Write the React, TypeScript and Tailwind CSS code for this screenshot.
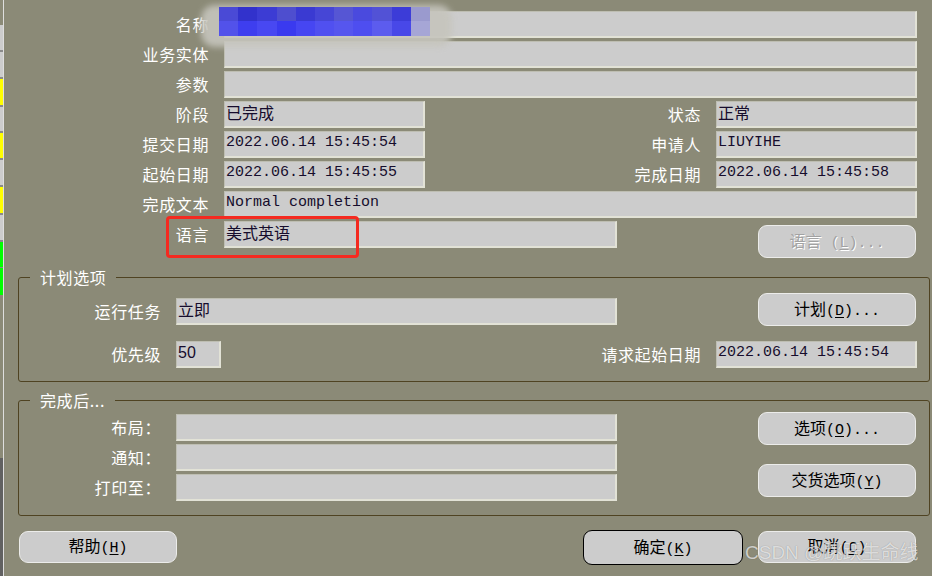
import React from "react";

const cjk = "font-['Noto_Sans_CJK_SC',sans-serif]";
const mono = "font-['Liberation_Mono','Noto_Sans_CJK_SC',monospace]";

type FIELD_PROPS = {
  w: string;
  children?: React.ReactNode;
  font?: string;
  className?: string;
};

function Field(props: FIELD_PROPS) {
  const { w, children, font, className } = props;
  return (
    <div
      className={`${w} ${className ?? ""} h-[27px] shrink-0 overflow-hidden whitespace-pre bg-[#cccccc] border-t border-l border-t-[#bebeb2] border-l-[#bebeb2] border-r-2 border-b-2 border-r-[#e2e2d6] border-b-[#e2e2d6] pl-px leading-[21px] text-[#160c2c] ${
        font ?? cjk
      }`}
    >
      {children}
    </div>
  );
}

function Label({ w, text, className }: { w: string; text: string; className?: string }) {
  return (
    <div
      className={`${w} ${className ?? ""} shrink-0 text-right text-[16px] leading-[27px] tracking-[0.6px] text-white ${cjk}`}
    >
      {text}
    </div>
  );
}

type BTN_PROPS = {
  zh: string;
  hot: string;
  dots?: boolean;
  disabled?: boolean;
  className?: string;
};

function Btn(props: BTN_PROPS) {
  const { zh, hot, dots, disabled, className } = props;
  return (
    <button
      className={`${
        className ?? "h-[33px] w-[158px] border-[#ececea]"
      } flex shrink-0 items-center justify-center rounded-[9px] border bg-[#cccccc] text-[16px] ${
        disabled
          ? "text-[#a2a2a2] [text-shadow:1px_1px_0_#ffffff]"
          : "text-black"
      }`}
    >
      <span className="whitespace-pre leading-[20px]">
        <span className={cjk}>{zh}</span>
        <span className={`${mono} text-[15px]`}>
          {disabled ? " (" : "("}
          <span className="underline underline-offset-2">{hot}</span>)
          {dots ? "..." : ""}
        </span>
      </span>
    </button>
  );
}

const stripe = [
  { h: "h-[25px]", c: "bg-[#8b8a77]" },
  { h: "h-[25px]", c: "bg-[#cccccc]" },
  { h: "h-[2px]", c: "bg-[#8a8a8a]" },
  { h: "h-[25px]", c: "bg-[#cccccc]" },
  { h: "h-[2px]", c: "bg-[#8a8a8a]" },
  { h: "h-[26px]", c: "bg-[#ffff00]" },
  { h: "h-[2px]", c: "bg-[#8a8a8a]" },
  { h: "h-[24px]", c: "bg-[#cccccc]" },
  { h: "h-[2px]", c: "bg-[#8a8a8a]" },
  { h: "h-[25px]", c: "bg-[#ffff00]" },
  { h: "h-[2px]", c: "bg-[#8a8a8a]" },
  { h: "h-[25px]", c: "bg-[#cccccc]" },
  { h: "h-[2px]", c: "bg-[#8a8a8a]" },
  { h: "h-[26px]", c: "bg-[#ffff00]" },
  { h: "h-[2px]", c: "bg-[#8a8a8a]" },
  { h: "h-[25px]", c: "bg-[#cccccc]" },
  { h: "h-[2px]", c: "bg-[#8a8a8a]" },
  { h: "h-[25px]", c: "bg-[#00ff00]" },
  { h: "h-[1px]", c: "bg-[#8a8a8a]" },
  { h: "h-[27px]", c: "bg-[#00ff00]" },
  { h: "h-[163px]", c: "bg-[#8b8a77]" },
  { h: "flex-1", c: "bg-[#616161]" },
];

const blurTop = ["#4a4ad6", "#3232cc", "#3c3cd4", "#4e4ecf", "#3a3ad2", "#4646d6", "#5656d4", "#4a4ade", "#5252d6", "#3c3cd8", "#9a9ace"];
const blurBottom = ["#5252ea", "#3e3eef", "#4848f2", "#3a3aef", "#4646f2", "#5050f0", "#5656ee", "#4e4ef0", "#5c5cee", "#4848e8", "#a6a6d6"];

export default function App() {
  return (
    <div className="relative flex h-[576px] w-[932px] overflow-hidden bg-[#8b8a77]">
      <div className="flex w-[3px] shrink-0 flex-col">
        {stripe.map((s, i) => (
          <div key={i} className={`${s.h} ${s.c} shrink-0`} />
        ))}
      </div>
      <div className="w-px shrink-0 bg-[#dedede]" />

      <div className="flex flex-1 flex-col">
        {/* top fields */}
        <div className="flex flex-col gap-[3px] pt-[11px]">
          <div className="flex items-start">
            <Label w="w-[205px]" text="名称" />
            <Field w="w-[693px]" className="ml-[15px]" />
          </div>
          <div className="flex items-start">
            <Label w="w-[205px]" text="业务实体" />
            <Field w="w-[693px]" className="ml-[15px]" />
          </div>
          <div className="flex items-start">
            <Label w="w-[205px]" text="参数" />
            <Field w="w-[693px]" className="ml-[15px]" />
          </div>
          <div className="flex items-start">
            <Label w="w-[205px]" text="阶段" />
            <Field w="w-[201px]" className="ml-[15px]">
              已完成
            </Field>
            <Label w="w-[276px]" text="状态" />
            <Field w="w-[201px]" className="ml-[15px]">
              正常
            </Field>
          </div>
          <div className="flex items-start">
            <Label w="w-[205px]" text="提交日期" />
            <Field w="w-[201px]" className="ml-[15px]" font={mono}>
              <span className="text-[15px]">2022.06.14 15:45:54</span>
            </Field>
            <Label w="w-[276px]" text="申请人" />
            <Field w="w-[201px]" className="ml-[15px]" font={mono}>
              <span className="text-[15px]">LIUYIHE</span>
            </Field>
          </div>
          <div className="flex items-start">
            <Label w="w-[205px]" text="起始日期" />
            <Field w="w-[201px]" className="ml-[15px]" font={mono}>
              <span className="text-[15px]">2022.06.14 15:45:55</span>
            </Field>
            <Label w="w-[276px]" text="完成日期" />
            <Field w="w-[201px]" className="ml-[15px]" font={mono}>
              <span className="text-[15px]">2022.06.14 15:45:58</span>
            </Field>
          </div>
          <div className="flex items-start">
            <Label w="w-[205px]" text="完成文本" />
            <Field w="w-[693px]" className="ml-[15px]" font={mono}>
              <span className="text-[15px]">Normal completion</span>
            </Field>
          </div>
          <div className="flex items-start">
            <Label w="w-[205px]" text="语言" />
            <Field w="w-[393px]" className="ml-[15px]">
              美式英语
            </Field>
            <div className="ml-[141px] mt-[4px]">
              <Btn zh="语言" hot="L" dots disabled />
            </div>
          </div>
        </div>

        {/* 计划选项 */}
        <fieldset className="ml-[14px] mt-[10px] w-[912px] rounded-[3px] border border-[#4f4322] px-0 pb-[13px] pt-[7px]">
          <legend className={`ml-[11px] px-[10px] text-[16px] leading-[18px] tracking-[0.6px] text-white ${cjk}`}>
            计划选项
          </legend>
          <div className="flex items-start">
            <Label w="w-[142px]" text="运行任务" className="mt-[5px]" />
            <Field w="w-[441px]" className="ml-[15px] mt-[5px]">
              立即
            </Field>
            <div className="ml-[141px]">
              <Btn zh="计划" hot="D" dots />
            </div>
          </div>
          <div className="mt-[15px] flex items-start">
            <Label w="w-[142px]" text="优先级" />
            <Field
              w="w-[45px]"
              className="ml-[15px]"
              font="font-['Liberation_Sans',sans-serif]"
            >
              <span className="text-[16px]">50</span>
            </Field>
            <Label w="w-[480px]" text="请求起始日期" />
            <Field w="w-[201px]" className="ml-[15px]" font={mono}>
              <span className="text-[15px]">2022.06.14 15:45:54</span>
            </Field>
          </div>
        </fieldset>

        {/* 完成后... */}
        <fieldset className="ml-[14px] mt-[9px] w-[912px] rounded-[3px] border border-[#4f4322] px-0 pb-[14px] pt-[3px]">
          <legend className={`ml-[11px] px-[10px] text-[16px] leading-[18px] tracking-[0.6px] text-white ${cjk}`}>
            完成后...
          </legend>
          <div className="flex items-start">
            <div className="mt-[2px] flex flex-col gap-[3px]">
              <div className="flex items-start">
                <Label w="w-[142px]" text="布局：" />
                <Field w="w-[441px]" className="ml-[15px]" />
              </div>
              <div className="flex items-start">
                <Label w="w-[142px]" text="通知：" />
                <Field w="w-[441px]" className="ml-[15px]" />
              </div>
              <div className="flex items-start">
                <Label w="w-[142px]" text="打印至：" />
                <Field w="w-[441px]" className="ml-[15px]" />
              </div>
            </div>
            <div className="ml-[141px] flex flex-col gap-[19px]">
              <Btn zh="选项" hot="O" dots />
              <Btn zh="交货选项" hot="Y" />
            </div>
          </div>
        </fieldset>

        {/* bottom buttons */}
        <div className="mt-[15px] flex items-start">
          <div className="ml-[15px]">
            <Btn zh="帮助" hot="H" className="h-[32px] w-[158px] border-[#ececea]" />
          </div>
          <div className="ml-[406px] -mt-px">
            <Btn zh="确定" hot="K" className="h-[35px] w-[160px] border-black" />
          </div>
          <div className="ml-[15px]">
            <Btn zh="取消" hot="C" className="h-[32px] w-[158px] border-[#ececea]" />
          </div>
        </div>
      </div>

      {/* blurred name */}
      <div className="absolute left-[201px] top-[5px] h-[42px] w-[251px] rounded-[14px] bg-[#c6c5bd] opacity-90 blur-[3px]" />
      <div className="absolute left-[219px] top-[7px] grid w-[211px] grid-cols-11 blur-[0.6px]">
        {blurTop.map((c, i) => (
          <div key={"t" + i} className="h-[14px]" style={{ background: c }} />
        ))}
        {blurBottom.map((c, i) => (
          <div key={"b" + i} className="h-[15px]" style={{ background: c }} />
        ))}
      </div>

      {/* annotation */}
      <div className="absolute left-[166px] top-[216px] h-[42px] w-[193px] rounded-[4px] border-[3px] border-[#f42a20]" />

      {/* watermark */}
      <div className="absolute left-[745px] top-[541px] whitespace-nowrap font-['Liberation_Sans','Noto_Sans_CJK_SC',sans-serif] text-[19px] leading-[24px] text-white/70 [text-shadow:0_0_1px_rgba(0,0,0,0.35)]">
        CSDN @跳跃生命线
      </div>
    </div>
  );
}
